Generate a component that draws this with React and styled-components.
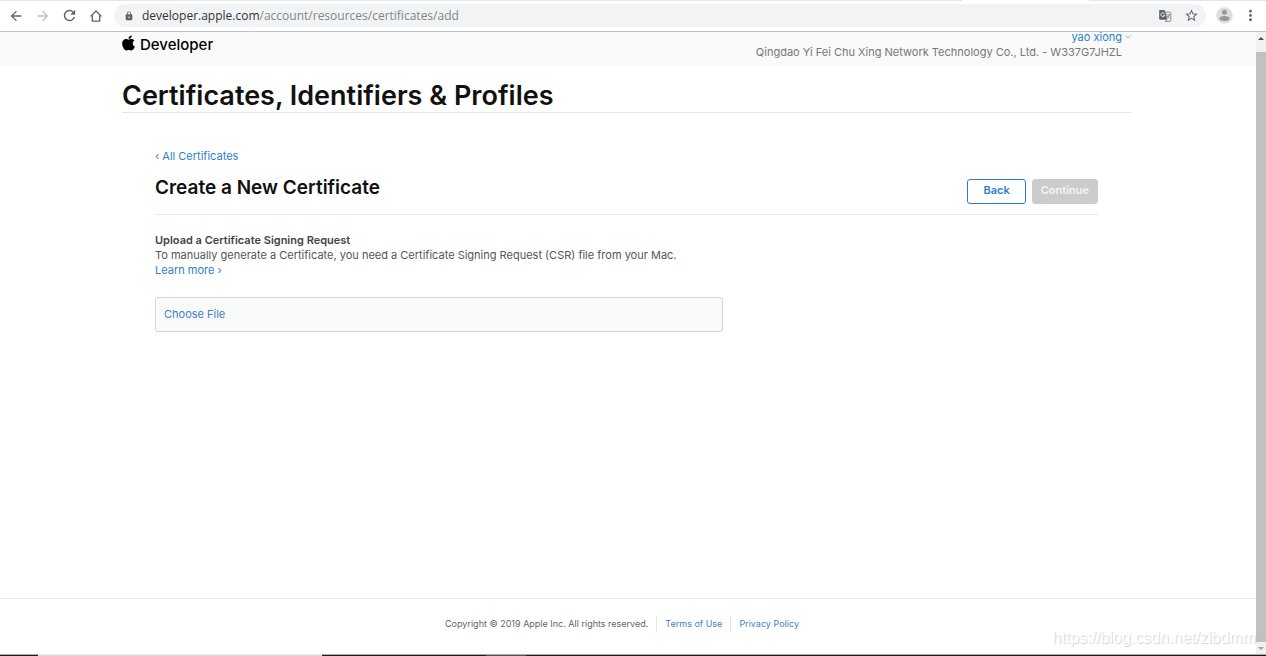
import React from "react";
import styled, { createGlobalStyle, ThemeProvider } from "styled-components";
import {
  MdArrowBack,
  MdArrowForward,
  MdRefresh,
  MdLock,
  MdStarBorder,
  MdMoreVert
} from "react-icons/md";
import { FaApple } from "react-icons/fa";

const theme = {
  colors: {
    ink: "#111",
    text: "#555",
    muted: "#777",
    link: "#2d7fcc",
    footerLink: "#3f80cf",
    line: "#e6e6e6",
    chrome: "#5f6368",
    disabled: "#ccc"
  },
  fonts: {
    page: '"Inter", "Liberation Sans", sans-serif',
    chrome: '"Open Sans", "Noto Sans", sans-serif'
  }
};

const GlobalStyle = createGlobalStyle`
  * {
    box-sizing: border-box;
  }
  body {
    margin: 0;
    background: #fff;
    font-family: ${theme.fonts.page};
    font-size: 11px;
    line-height: 15px;
    color: ${theme.colors.text};
  }
  h1, h2, h3, p {
    margin: 0;
  }
  button, input {
    font: inherit;
  }
  svg {
    display: block;
    flex: none;
  }
`;

const Window = styled.div`
  position: relative;
  display: flex;
  flex-direction: column;
  height: 100vh;
  overflow: hidden;
`;

const TabEdge = styled.div`
  display: flex;
  justify-content: space-between;
  height: 1px;
`;

const TabLine = styled.div`
  width: ${({ $size }) => $size};
  background: #e3e5e9;
`;

const Toolbar = styled.div`
  display: flex;
  align-items: center;
  height: 31px;
  padding: 0 8px 1px;
  border-bottom: 1px solid #bfc1c4;
`;

const IconButton = styled.button`
  display: flex;
  align-items: center;
  justify-content: center;
  width: ${({ $width }) => $width || 26}px;
  height: 22px;
  padding: 0;
  border: 0;
  background: none;
  color: ${({ theme }) => theme.colors.chrome};

  &:disabled {
    color: #bdc1c6;
  }
`;

const AddressBar = styled.div`
  display: flex;
  flex: 1;
  align-items: center;
  height: 23px;
  padding: 0 2px 0 10px;
  border-radius: 12px;
  background: #f1f3f4;
  color: ${({ theme }) => theme.colors.chrome};
`;

const Url = styled.div`
  flex: 1;
  margin-left: 8px;
  font-family: ${({ theme }) => theme.fonts.chrome};
  font-size: 12px;
  line-height: 16px;
  color: #80868b;

  span {
    color: #303236;
  }
`;

const Viewport = styled.div`
  display: flex;
  flex: 1;
  min-height: 0;
`;

const Page = styled.div`
  display: flex;
  flex: 1;
  flex-direction: column;
`;

const Header = styled.header`
  display: flex;
  align-items: center;
  justify-content: space-between;
  height: 34px;
  padding: 0 125px 9px 122px;
  background: #fafafa;
`;

const Brand = styled.a`
  display: flex;
  align-items: center;
  gap: 5px;
  font-size: 15px;
  font-weight: 500;
  line-height: 18px;
  color: #000;
  text-decoration: none;
`;

const AppleLogo = styled(FaApple)`
  width: 13px;
  height: 18px;
  margin-bottom: 4px;
`;

const Account = styled.div`
  display: grid;
  grid-template-columns: 1fr 9px;
  align-items: center;
  justify-items: end;
  line-height: 15px;
  color: ${({ theme }) => theme.colors.muted};
`;

const Link = styled.a`
  color: ${({ theme }) => theme.colors.link};
  text-decoration: none;
`;

const Main = styled.main`
  flex: 1;
  padding: 13px 125px 0 122px;
`;

const Title = styled.h1`
  border-bottom: 1px solid ${({ theme }) => theme.colors.line};
  font-size: 27px;
  font-weight: 600;
  line-height: 33px;
  color: ${({ theme }) => theme.colors.ink};
`;

const Content = styled.section`
  padding: 36px 33px 0;
`;

const Heading = styled.div`
  display: flex;
  align-items: flex-end;
  justify-content: space-between;
  margin-top: 12px;
  padding-bottom: 10px;
  border-bottom: 1px solid ${({ theme }) => theme.colors.line};
`;

const Subtitle = styled.h2`
  align-self: flex-start;
  font-size: 19px;
  font-weight: 600;
  line-height: 24px;
  color: ${({ theme }) => theme.colors.ink};
`;

const Actions = styled.div`
  display: flex;
  gap: 6px;
  padding-top: 3px;
`;

const Button = styled.button`
  height: 25px;
  padding: 0 ${({ $wide }) => ($wide ? 15 : 8)}px 2px;
  border: 1px solid ${({ theme }) => theme.colors.link};
  border-radius: 3px;
  background: #fff;
  font-weight: 600;
  color: ${({ theme }) => theme.colors.link};

  &:disabled {
    border-color: ${({ theme }) => theme.colors.disabled};
    background: ${({ theme }) => theme.colors.disabled};
    color: #f5f5f5;
  }
`;

const Request = styled.div`
  padding-top: 18px;
`;

const RequestTitle = styled.h3`
  font-size: 11px;
  font-weight: 600;
  line-height: 15px;
  color: #444;
`;

const FilePicker = styled.label`
  display: block;
  max-width: 568px;
  margin-top: 19px;
  padding: 9px 8px;
  border: 1px solid #d6d6d6;
  border-radius: 3px;
  background: #f9fafa;
  color: ${({ theme }) => theme.colors.footerLink};
  cursor: pointer;
`;

const FileInput = styled.input`
  display: none;
`;

const Footer = styled.footer`
  display: flex;
  justify-content: center;
  padding: 17px 12px 22px 0;
  border-top: 1px solid ${({ theme }) => theme.colors.line};
  font-size: 9px;
  line-height: 16px;
  color: #666;
`;

const FooterLink = styled.a`
  margin-left: 8px;
  padding-left: 8px;
  border-left: 1px solid ${({ theme }) => theme.colors.line};
  color: ${({ theme }) => theme.colors.footerLink};
  text-decoration: none;
`;

const Scrollbar = styled.div`
  display: flex;
  flex-direction: column;
  align-items: center;
  width: 10px;
  background: #f1f1f1;
`;

const Thumb = styled.div`
  flex: 1;
  width: 100%;
  margin-top: 12px;
  background: #c1c1c1;
`;

const Arrow = styled.div`
  margin: ${({ $down }) => ($down ? "5px 0 4px" : "5px 0 0")};
  border: 3px solid transparent;
  border-top: ${({ $down }) => ($down ? "3px solid #a3a3a3" : 0)};
  border-bottom: ${({ $down }) => ($down ? 0 : "3px solid #505050")};
`;

const Taskbar = styled.div`
  display: flex;
  height: 2px;
`;

const TaskSegment = styled.div`
  flex: ${({ $size }) => $size};
  border-top: 1px solid ${({ $edge }) => $edge || "#aaa"};
  background: ${({ $fill }) => $fill || "#1b1b1b"};
`;

const Watermark = styled.div`
  position: absolute;
  right: 10px;
  bottom: 8px;
  font-family: "Liberation Sans", sans-serif;
  font-size: 16px;
  line-height: 20px;
  color: #fff;
  text-shadow: 1px 1px 1px #d0d0d0;
  pointer-events: none;
`;

const HomeIcon = () => (
  <svg width="14" height="14" viewBox="0 0 14 14" fill="none" stroke="currentColor" strokeWidth="1.3">
    <path d="M1.6 7.4 7 2l5.4 5.4M3.3 6.2v5.9h7.4V6.2" />
  </svg>
);

const TranslateIcon = () => (
  <svg width="14" height="14" viewBox="0 0 14 14">
    <path d="M1.5 1h5l1.4 3.2 1.4 6.6H2.5a1.3 1.3 0 0 1-1.3-1.3V2.3Q1.2 1 1.5 1z" fill="#5f6368" />
    <path d="M7.6 3.2h4.3a.9.9 0 0 1 .9.9v7.4a.9.9 0 0 1-.9.9H7.2l1.6-1.8" fill="none" stroke="#8a8e92" />
    <path d="M6.5 4.5a2 2 0 1 0 .3 1.7H5" fill="none" stroke="#f1f3f4" strokeWidth=".9" />
    <path d="M8.7 5.8h3.4M10.3 5v.8M11.4 5.9Q10.8 8 9.3 9M9.2 7q1 1.5 2.5 2.2" fill="none" stroke="#73777b" strokeWidth=".8" />
  </svg>
);

const AvatarIcon = () => (
  <svg width="17" height="17" viewBox="0 0 17 17">
    <circle cx="8.5" cy="8.5" r="8.3" fill="#dedede" />
    <circle cx="8.5" cy="5.2" r="2.5" fill="#999" />
    <ellipse cx="8.5" cy="11.6" rx="5" ry="2.5" fill="#999" />
  </svg>
);

const ChevronIcon = () => (
  <svg width="6" height="4" viewBox="0 0 6 4" fill="none" stroke="#8fb8e2">
    <path d="M.5.8 3 3 5.5.8" />
  </svg>
);

export default () => {
  return (
    <ThemeProvider theme={theme}>
      <GlobalStyle />
      <Window>
        <TabEdge>
          <TabLine $size="76%" />
          <TabLine $size="14%" />
        </TabEdge>
        <Toolbar>
          <IconButton $width={16} aria-label="Back">
            <MdArrowBack size={16} />
          </IconButton>
          <IconButton $width={37} aria-label="Forward" disabled>
            <MdArrowForward size={16} />
          </IconButton>
          <IconButton $width={16} aria-label="Reload">
            <MdRefresh size={17} />
          </IconButton>
          <IconButton $width={37} aria-label="Home">
            <HomeIcon />
          </IconButton>
          <AddressBar>
            <MdLock size={10} />
            <Url>
              <span>developer.apple.com</span>/account/resources/certificates/add
            </Url>
            <IconButton aria-label="Translate this page">
              <TranslateIcon />
            </IconButton>
            <IconButton aria-label="Bookmark this page">
              <MdStarBorder size={15} />
            </IconButton>
          </AddressBar>
          <IconButton $width={36} aria-label="Profile">
            <AvatarIcon />
          </IconButton>
          <IconButton $width={16} aria-label="Menu">
            <MdMoreVert size={17} />
          </IconButton>
        </Toolbar>
        <Viewport>
          <Page>
            <Header>
              <Brand href="#">
                <AppleLogo />
                Developer
              </Brand>
              <Account>
                <Link href="#">yao xiong</Link>
                <ChevronIcon />
                <span>Qingdao Yi Fei Chu Xing Network Technology Co., Ltd. - W337G7JHZL</span>
              </Account>
            </Header>
            <Main>
              <Title>Certificates, Identifiers &amp; Profiles</Title>
              <Content>
                <Link href="#">‹ All Certificates</Link>
                <Heading>
                  <Subtitle>Create a New Certificate</Subtitle>
                  <Actions>
                    <Button $wide>Back</Button>
                    <Button disabled>Continue</Button>
                  </Actions>
                </Heading>
                <Request>
                  <RequestTitle>Upload a Certificate Signing Request</RequestTitle>
                  <p>
                    To manually generate a Certificate, you need a Certificate Signing Request (CSR) file from your Mac.
                  </p>
                  <Link href="#">Learn more ›</Link>
                  <FilePicker htmlFor="csr">
                    Choose File
                    <FileInput id="csr" type="file" />
                  </FilePicker>
                </Request>
              </Content>
            </Main>
            <Footer>
              <span>Copyright © 2019 Apple Inc. All rights reserved.</span>
              <FooterLink href="#">Terms of Use</FooterLink>
              <FooterLink href="#">Privacy Policy</FooterLink>
            </Footer>
          </Page>
          <Scrollbar>
            <Arrow />
            <Thumb />
            <Arrow $down />
          </Scrollbar>
        </Viewport>
        <Taskbar>
          <TaskSegment $size={38} />
          <TaskSegment $size={284} $edge="#eee" $fill="#ddd" />
          <TaskSegment $size={164} />
          <TaskSegment $size={40} $edge="#aaa" $fill="#555" />
          <TaskSegment $size={740} />
        </Taskbar>
        <Watermark>https://blog.csdn.net/zlbdmm</Watermark>
      </Window>
    </ThemeProvider>
  );
};
